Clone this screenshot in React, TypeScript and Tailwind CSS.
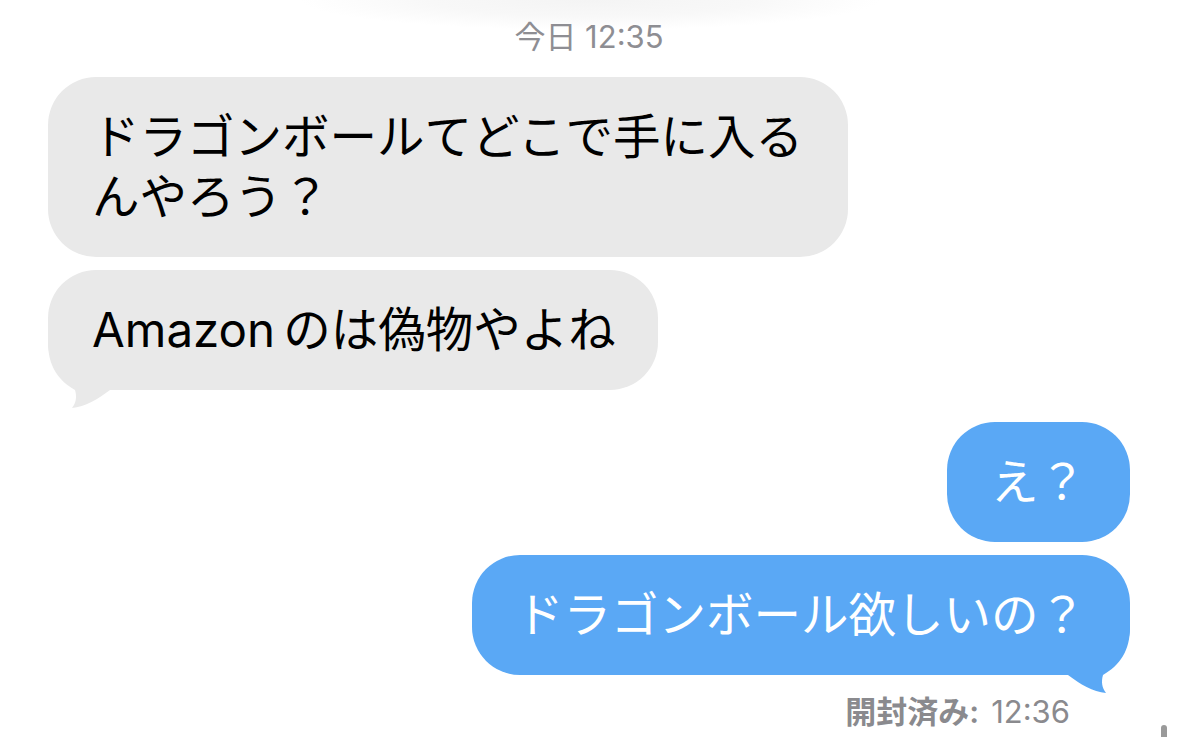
import React from "react";

const font = { fontFamily: '"Inter", "Noto Sans CJK JP", sans-serif' };

function Tail({ color, side }: { color: string; side: "left" | "right" }) {
  return (
    <svg
      viewBox="0 0 70 80"
      className={
        side === "left"
          ? "absolute left-0 bottom-[-20px] h-[80px] w-[70px]"
          : "absolute right-0 bottom-[-20px] h-[80px] w-[70px] -scale-x-100"
      }
    >
      <path
        d="M0 0 L0 12 C0 36 10 50 27 60 C29 67 28 73 24 78 C37 77 50 69 62 60 L62 0 Z"
        fill={color}
      />
    </svg>
  );
}

export default function App() {
  return (
    <main className="relative h-[737px] w-full overflow-hidden bg-white text-black" style={font}>
      <div className="pointer-events-none absolute left-[300px] top-[-30px] h-[60px] w-[580px] bg-[radial-gradient(closest-side,#f4f4f4_0%,#f8f8f8_55%,#ffffff_100%)]" />

      <div className="relative flex flex-col px-[48px] pt-[19px]">
        <p className="text-center text-[31px] leading-[36px] text-[#8e8e93]">今日 12:35</p>

        <div className="mt-[22px] flex flex-col items-start gap-[13px]">
          <div className="w-[800px] rounded-[48px] bg-[#e9e9e9] py-[30px] pl-[44px] pr-[30px] text-[47.5px] leading-[60px]">
            ドラゴンボールてどこで手に入るんやろう？
          </div>
          <div className="relative rounded-[48px] bg-[#e9e9e9] py-[30px] pl-[44px] pr-[42px] text-[47.5px] leading-[60px]">
            <Tail color="#e9e9e9" side="left" />
            <span className="relative">Amazon<span className="ml-[8px]">のは偽物やよね</span></span>
          </div>
        </div>

        <div className="mt-[32px] flex flex-col items-end gap-[13px]">
          <div className="rounded-[48px] bg-[#5aa8f5] px-[44px] py-[30px] text-[47.5px] leading-[60px] text-white">
            え？
          </div>
          <div className="relative rounded-[48px] bg-[#5aa8f5] px-[44px] py-[30px] text-[47.5px] leading-[60px] text-white">
            <Tail color="#5aa8f5" side="right" />
            <span className="relative">ドラゴンボール欲しいの？</span>
          </div>
        </div>

        <p className="mt-[19px] pr-[60px] text-right text-[31px] leading-[36px] text-[#8a8a8e]">
          <span className="font-semibold">開封済み:</span>
          <span className="ml-[12px]">12:36</span>
        </p>
      </div>

      <div className="absolute left-[1161px] top-[725px] h-[20px] w-[6px] rounded-full bg-[#9a9a9a]" />
    </main>
  );
}
